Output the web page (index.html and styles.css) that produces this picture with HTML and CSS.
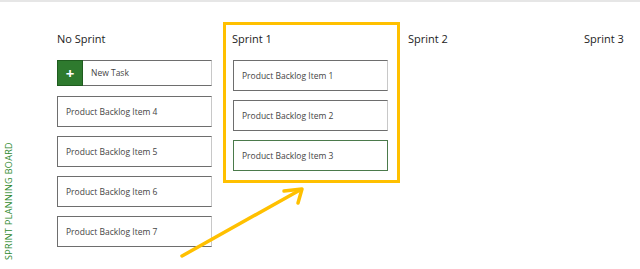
FILE: index.html
```html
<!DOCTYPE html>
<html lang="en">
<head>
    <meta charset="UTF-8">
    <title>Sprint Planning Board</title>
    <link rel="stylesheet" href="styles.css">
</head>
<body>
    <div class="page">
        <aside class="side">
            <span class="side-label">SPRINT PLANNING BOARD</span>
        </aside>

        <main class="board">
            <section class="col col-backlog">
                <h3 class="col-title">No Sprint</h3>
                <div class="card card-new">
                    <span class="add">+</span>
                    <span class="new-text">New Task</span>
                </div>
                <div class="card">Product Backlog Item 4</div>
                <div class="card">Product Backlog Item 5</div>
                <div class="card">Product Backlog Item 6</div>
                <div class="card">Product Backlog Item 7</div>
            </section>

            <section class="col col-sprint">
                <h3 class="col-title">Sprint 1</h3>
                <div class="card">Product Backlog Item 1</div>
                <div class="card">Product Backlog Item 2</div>
                <div class="card card-selected">Product Backlog Item 3</div>
            </section>

            <section class="col col-plain">
                <h3 class="col-title">Sprint 2</h3>
            </section>

            <section class="col col-plain">
                <h3 class="col-title">Sprint 3</h3>
            </section>
        </main>
    </div>

    <!-- annotation arrow drawn over the board -->
    <svg class="arrow" width="640" height="269" viewBox="0 0 640 269">
        <path d="M182 256 L300 190" />
        <path d="M284 191 L302 189 L298 203" />
    </svg>
</body>
</html>
```

FILE: styles.css
```css
body {
    margin: 0;
    background: #ffffff;
    font-family: "Open Sans", "Noto Sans", sans-serif;
    color: #333333;
    border-top: 2px solid #e6e6e6;
}
.page {
    display: flex;
    height: 267px;
    overflow: hidden;
}
.side {
    flex-shrink: 0;
    width: 16px;
    display: flex;
    align-items: flex-end;
    justify-content: center;
    padding-bottom: 9px;
}
.side-label {
    writing-mode: vertical-rl;
    transform: rotate(180deg);
    font-size: 9px;
    letter-spacing: 0.35px;
    color: #2f8a2f;
    white-space: nowrap;
}
.board {
    flex-shrink: 0;
    display: flex;
    align-items: flex-start;
    padding-top: 20px;
    padding-left: 41px;
}
.col {
    flex-shrink: 0;
    display: flex;
    flex-direction: column;
    gap: 9px;
}
.col-title {
    margin: 0 0 4px 0;
    height: 16px;
    line-height: 16px;
    font-size: 11px;
    font-weight: normal;
    color: #222222;
}
.col-backlog {
    width: 155px;
    padding-top: 9px;
    margin-right: 11px;
}
.col-sprint {
    width: 155px;
    border: 3px solid #ffc000;
    padding: 6px 9px 9px 7px;
}
.col-sprint .col-title {
    margin-left: -1px;
}
.col-plain {
    width: 168px;
    padding-top: 9px;
    padding-left: 8px;
}
.card {
    height: 29px;
    line-height: 29px;
    padding-left: 8px;
    border: 1px solid #6e6e6e;
    border-right-color: #c8c8c8;
    font-size: 8.5px;
    color: #444444;
    white-space: nowrap;
}
.card-selected {
    border: 1px solid #4b7a4b;
}
.card-new {
    height: 24px;
    line-height: 24px;
    padding-left: 0;
    display: flex;
    margin-bottom: 1px;
}
.add {
    width: 26px;
    margin: -1px 0 -1px -1px;
    background: #2e7a2e;
    border: 1px solid #1f5c1f;
    box-sizing: border-box;
    color: white;
    font-size: 15px;
    font-weight: bold;
    text-align: center;
    line-height: 24px;
}
.new-text {
    padding-left: 8px;
}
.arrow {
    position: absolute;
    left: 0;
    top: 0;
    pointer-events: none;
}
.arrow path {
    fill: none;
    stroke: #ffc000;
    stroke-width: 3.5;
    stroke-linecap: round;
    stroke-linejoin: round;
}
```
